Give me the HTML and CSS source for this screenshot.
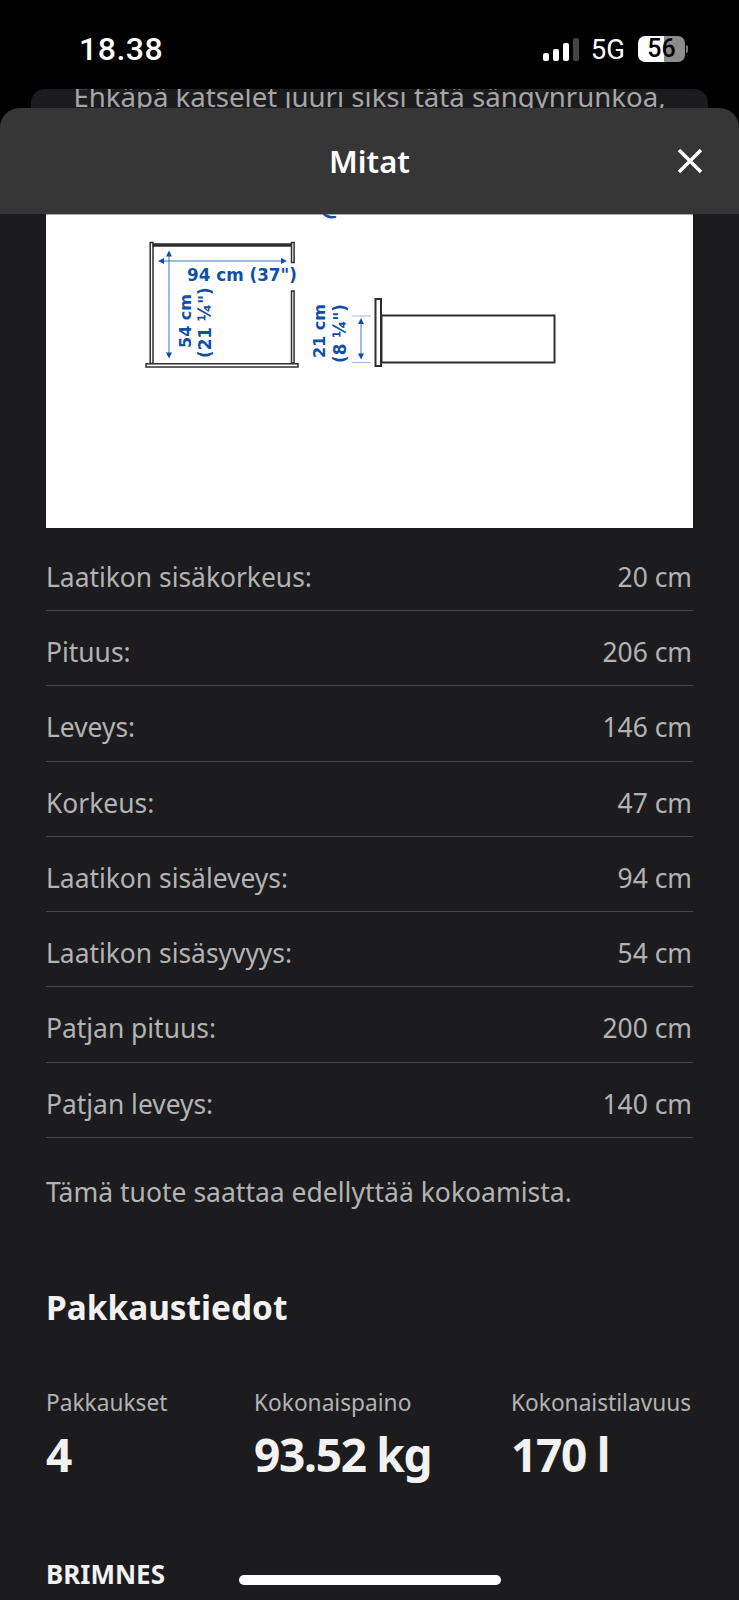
FILE: index.html
```html
<!DOCTYPE html>
<html lang="en">
<head>
    <meta charset="UTF-8">
    <meta name="viewport" content="width=device-width, initial-scale=1.0">
    <title>Mitat</title>
    <link rel="stylesheet" href="styles.css">
</head>
<body>

<div class="status">
    <span class="time">18.38</span>
    <div class="status-right">
        <div class="signal"><i class="s1"></i><i class="s2"></i><i class="s3"></i><i class="s4"></i></div>
        <span class="net">5G</span>
        <div class="battery"><div class="battery-body">56</div><div class="battery-tip"></div></div>
    </div>
</div>

<div class="peek">
    <p>Ehkäpä katselet juuri siksi tätä sängynrunkoa,</p>
</div>

<div class="sheet">
    <header class="sheet-head">
        <h1>Mitat</h1>
        <button class="close" type="button" aria-label="Sulje">
            <svg width="26" height="26" viewBox="0 0 26 26"><path d="M2 2 L24 24 M24 2 L2 24" stroke="#fff" stroke-width="3.4" fill="none"/></svg>
        </button>
    </header>

    <div class="content">
        <svg class="drawing" viewBox="46 214 647 314" width="647" height="314">
            <path d="M46 214.5 H693" stroke="#a8a8a8" stroke-width="1"/>
            <!-- front view -->
            <g fill="#fff" stroke="#2e2e2e" stroke-width="1.5">
                <rect x="150.2" y="242.5" width="2.8" height="121"/>
                <rect x="153.5" y="244" width="137" height="2" fill="#2e2e2e"/>
                <rect x="291.5" y="242.5" width="2.6" height="20"/>
                <rect x="291.5" y="291" width="2.6" height="72"/>
                <rect x="146" y="363.8" width="152" height="3.2"/>
            </g>
            <!-- side view -->
            <g fill="#fff" stroke="#2e2e2e" stroke-width="2">
                <rect x="381.5" y="315.5" width="173" height="47"/>
                <rect x="375.5" y="299" width="5.5" height="67"/>
            </g>
            <!-- measure lines -->
            <g stroke="#1f5fb0" stroke-width="1" fill="none" opacity="0.85">
                <path d="M160 261 H284"/>
                <path d="M169 254 V355"/>
                <path d="M361 322 V355"/>
                <path d="M352 316 H371 M352 362.5 H371" stroke="#8fa9cf"/>
            </g>
            <g fill="#0f4fa8">
                <path d="M158 261 l6 -3 v6 z M287 261 l-6 -3 v6 z"/>
                <path d="M169 250.5 l-3 6 h6 z M169 358.5 l-3 -6 h6 z"/>
                <path d="M361 318 l-3 6 h6 z M361 359.5 l-3 -6 h6 z"/>
            </g>
            <g class="dim">
                <text x="187" y="281">94 cm (37")</text>
                <text class="dim-short" transform="translate(191 348) rotate(-90)">54 cm</text>
                <text transform="translate(211 358) rotate(-90)">(21 ¼")</text>
                <text class="dim-short" transform="translate(325 358) rotate(-90)">21 cm</text>
                <text transform="translate(346 363) rotate(-90)">(8 ¼")</text>
                <text transform="translate(332 221) rotate(-70)">(</text>
            </g>
        </svg>

        <div class="row"><span>Laatikon sisäkorkeus:</span><span>20 cm</span></div>
        <div class="row"><span>Pituus:</span><span>206 cm</span></div>
        <div class="row"><span>Leveys:</span><span>146 cm</span></div>
        <div class="row"><span>Korkeus:</span><span>47 cm</span></div>
        <div class="row"><span>Laatikon sisäleveys:</span><span>94 cm</span></div>
        <div class="row"><span>Laatikon sisäsyvyys:</span><span>54 cm</span></div>
        <div class="row"><span>Patjan pituus:</span><span>200 cm</span></div>
        <div class="row"><span>Patjan leveys:</span><span>140 cm</span></div>

        <p class="note">Tämä tuote saattaa edellyttää kokoamista.</p>

        <h2>Pakkaustiedot</h2>

        <div class="stats">
            <div class="stat"><div class="stat-label">Pakkaukset</div><div class="stat-value">4</div></div>
            <div class="stat"><div class="stat-label">Kokonaispaino</div><div class="stat-value">93.52 kg</div></div>
            <div class="stat"><div class="stat-label">Kokonaistilavuus</div><div class="stat-value">170 l</div></div>
        </div>

        <h3>BRIMNES</h3>
    </div>
</div>

<div class="home-bar"></div>

</body>
</html>
```

FILE: styles.css
```css
* {
    box-sizing: border-box;
}

html, body {
    margin: 0;
    padding: 0;
}

body {
    width: 739px;
    height: 1600px;
    overflow: hidden;
    background-color: #000;
    font-family: "Noto Sans", sans-serif;
    position: relative;
}

.status {
    height: 89px;
    padding: 29px 51px 0 79px;
    display: flex;
    justify-content: space-between;
    align-items: flex-start;
    color: #fff;
    font-family: Roboto, "Liberation Sans", sans-serif;
}

.time {
    font-size: 32px;
    font-weight: 500;
    letter-spacing: 0.5px;
    line-height: 40px;
}

.status-right {
    display: flex;
    align-items: center;
    height: 40px;
}

.signal {
    display: flex;
    align-items: flex-end;
    gap: 4px;
    height: 23px;
    margin-right: 12px;
}

.signal i {
    display: block;
    width: 6px;
    border-radius: 2px;
    background-color: #fff;
}

.s1 { height: 8px; }
.s2 { height: 12px; }
.s3 { height: 18px; }
.s4 { height: 23px; background-color: #444 !important; }

.net {
    font-size: 27.5px;
    margin-right: 13px;
}

.battery {
    display: flex;
    align-items: center;
}

.battery-body {
    width: 47px;
    height: 26px;
    border-radius: 7px;
    background: linear-gradient(to right, #fff 0, #fff 55%, #8c8c8c 55%);
    color: #000;
    font-size: 25px;
    font-weight: 500;
    line-height: 26px;
    text-align: center;
}

.battery-tip {
    width: 2px;
    height: 8px;
    margin-left: 1px;
    border-radius: 0 2px 2px 0;
    background-color: #777;
}

.peek {
    height: 19px;
    margin: 0 31px;
    border-radius: 14px 14px 0 0;
    background-color: #1c1c1e;
    overflow: hidden;
    text-align: center;
}

.peek p {
    margin: -11px 0 0;
    font-size: 27.6px;
    line-height: 36px;
    color: #a6a6a6;
    white-space: nowrap;
}

.sheet {
    height: 1492px;
    overflow: hidden;
    background-color: #1c1c1e;
    border-radius: 20px 20px 0 0;
}

.sheet-head {
    height: 106px;
    background-color: #363636;
    display: flex;
    align-items: center;
    justify-content: center;
    position: relative;
}

.sheet-head h1 {
    margin: 0;
    color: #fff;
    font-size: 31px;
    font-weight: 600;
}

.close {
    position: absolute;
    right: 36px;
    top: 40px;
    padding: 0;
    border: none;
    background: none;
    line-height: 0;
}

.content {
    padding: 0 46px;
}

.drawing {
    display: block;
    background-color: #fff;
}

.dim text {
    fill: #0f4fa8;
    font-family: "DejaVu Sans", sans-serif;
    font-weight: bold;
    font-size: 16.8px;
}

.dim .dim-short {
    font-size: 16px;
}

.row {
    height: 75.3px;
    padding: 18px 1px 0 0;
    display: flex;
    justify-content: space-between;
    border-bottom: 1px solid #48484a;
    color: #b3b3b3;
    font-size: 26.4px;
    line-height: 46px;
}

.row:first-of-type {
    height: 83px;
    padding-top: 25.7px;
}

.note {
    margin: 31px 0 0;
    color: #b3b3b3;
    font-size: 26.5px;
    line-height: 46px;
}

h2 {
    margin: 70px 0 0;
    color: #f2f2f2;
    font-size: 33.4px;
    font-weight: 700;
    line-height: 44px;
}

.stats {
    display: grid;
    grid-template-columns: 208px 257px auto;
    margin-top: 59px;
}

.stat-label {
    color: #b3b3b3;
    font-size: 22.7px;
    line-height: 30px;
}

.stat-value {
    margin-top: 6px;
    color: #f2f2f2;
    font-size: 46px;
    font-weight: 700;
    letter-spacing: -1.3px;
    line-height: 60px;
}

h3 {
    margin: 72px 0 0;
    color: #f2f2f2;
    font-size: 26px;
    font-weight: 700;
}

.home-bar {
    position: absolute;
    left: 239px;
    bottom: 15px;
    width: 262px;
    height: 10px;
    border-radius: 5px;
    background-color: #fff;
}
```
